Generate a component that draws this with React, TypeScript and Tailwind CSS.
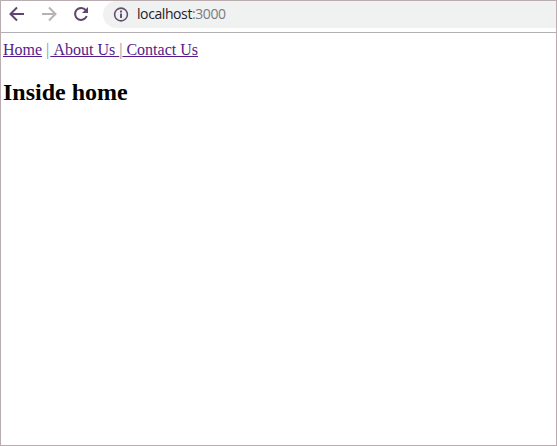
export default function App() {
  return (
    <div className="flex h-[446px] w-[557px] flex-col overflow-hidden border border-[#b9adaf] bg-white">
      <header className="flex h-8 shrink-0 items-start border-b border-[#b2b0b2]">
        <svg className="shrink-0" width="102" height="27" viewBox="1 1 102 27" fill="none" stroke="#62456f" strokeWidth="2">
          <path d="M24 14H11M17 7.5L10.5 14L17 20.5" />
          <path d="M42 14H55M49 7.5L55.5 14L49 20.5" stroke="#b9b2b4" />
          <path d="M85.8 10.2A6 6 0 1 0 86.7 16" />
          <path d="M88 7V13H82Z" fill="#62456f" stroke="none" />
        </svg>
        <div className="flex h-[27px] flex-1 items-center rounded-l-full bg-[#f0f2f1] pl-[10px]">
          <svg width="16" height="16" viewBox="0 0 16 16" fill="none" stroke="#62506f" strokeWidth="1.6">
            <circle cx="8" cy="7.5" r="6.4" />
            <path d="M8 6.5V11M8 3.5V5.5" strokeWidth="2" />
          </svg>
          <span className="relative -top-px ml-2 font-['Open_Sans',sans-serif] text-[14px] leading-5 tracking-[-0.41px] text-[#25202c]">localhost<span className="text-[#7b7b83]">:3000</span></span>
        </div>
      </header>
      <main className="px-[2px] pt-2 font-['Liberation_Serif',serif] text-black">
        <nav className="text-[16px] leading-[18px] text-[#551a8b]">
          <a className="underline">Home</a> <span className="text-[#839396]">|</span><a className="ml-px underline"> About Us </a><span className="text-[#839396]">|</span><a className="underline"> Contact Us</a>
        </nav>
        <h2 className="mt-5 text-[24px] leading-[27px] font-bold">Inside home</h2>
      </main>
    </div>
  );
}
